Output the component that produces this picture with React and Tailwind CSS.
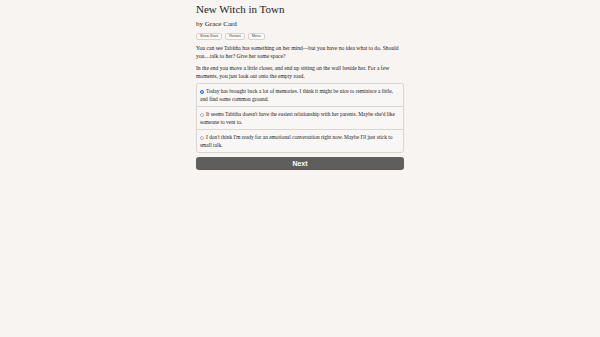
export default function App() {
  const options = [
    "Today has brought back a lot of memories. I think it might be nice to reminisce a little, and find some common ground.",
    "It seems Tabitha doesn't have the easiest relationship with her parents. Maybe she'd like someone to vent to.",
    "I don't think I'm ready for an emotional conversation right now. Maybe I'll just stick to small talk.",
  ];

  return (
    <div className="min-h-[337px] w-[600px] bg-[#f7f4f1] text-[#222] font-['Liberation_Serif',serif]">
      <div className="mx-auto w-[208px] pt-[3px]">
        {/* Header */}
        <h1 className="text-[11px] leading-[13px]">New Witch in Town</h1>
        <h2 className="mt-[4px] text-[7px] leading-[9px]">by Grace Card</h2>
        <div className="mt-[4px] flex gap-[3px] font-['Liberation_Sans',sans-serif]">
          <button className="h-[7px] rounded-[2px] border border-[#d6d3cf] bg-[#fbfaf8] px-[3px] text-[3.6px] leading-[5px] text-[#444]">Show Stats</button>
          <button className="h-[7px] rounded-[2px] border border-[#d6d3cf] bg-[#fbfaf8] px-[3px] text-[3.6px] leading-[5px] text-[#444]">Restart</button>
          <button className="h-[7px] rounded-[2px] border border-[#d6d3cf] bg-[#fbfaf8] px-[3px] text-[3.6px] leading-[5px] text-[#444]">Menu</button>
        </div>

        {/* Story text */}
        <p className="mt-[4px] text-[5.6px] leading-[8px]">
          You can see Tabitha has something on her mind—but you have no idea what to do. Should you…talk to her? Give her some space?
        </p>
        <p className="mt-[4px] text-[5.6px] leading-[8px]">
          In the end you move a little closer, and end up sitting on the wall beside her. For a few moments, you just look out onto the empty road.
        </p>

        {/* Choices */}
        <div className="mt-[3px] rounded-[3px] border border-[#d9d5d0] bg-[#f9f7f5]">
          {options.map((text, i) => (
            <div
              key={i}
              className={`px-[3px] py-[3px] text-[5.4px] leading-[8px] ${i > 0 ? "border-t border-[#d9d5d0]" : ""}`}
            >
              <span
                className={`mr-[2px] inline-block h-[4px] w-[4px] rounded-full border align-[-0.5px] ${i === 0 ? "border-[#1a73e8] bg-[#1a73e8] ring-1 ring-inset ring-white" : "border-[#b5b2ae] bg-white"}`}
              />
              {text}
            </div>
          ))}
        </div>

        {/* Next */}
        <button className="mt-[4px] block h-[13px] w-full rounded-[3px] bg-[#5f5e5c] font-['Liberation_Sans',sans-serif] text-[7px] font-bold leading-[13px] text-white">
          Next
        </button>
      </div>
    </div>
  );
}
